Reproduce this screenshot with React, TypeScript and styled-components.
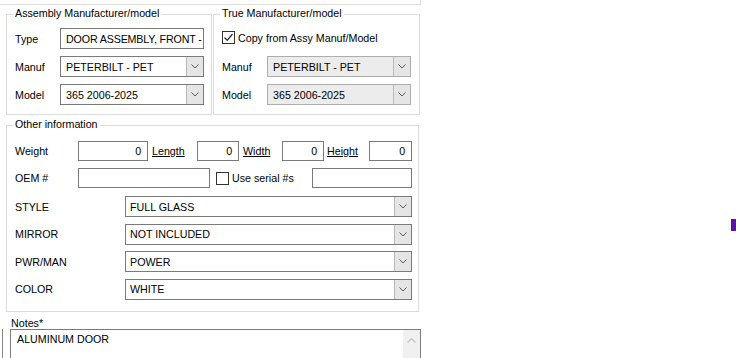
import React from "react";
import styled, { createGlobalStyle } from "styled-components";

const GlobalStyle = createGlobalStyle`
  html, body { margin: 0; padding: 0; background: #fff; }
  body {
    font-family: "Liberation Sans", Arial, sans-serif;
    font-size: 10.7px;
    color: #000;
  }
  * { box-sizing: border-box; }
`;

const Page = styled.div`
  width: 736px;
  height: 358px;
  overflow: hidden;
  display: flex;
  background: #fff;
`;

const Column = styled.div`
  width: 421px;
  flex: none;
  display: flex;
  flex-direction: column;
`;

const PrevEdge = styled.div`
  height: 5px;
  flex: none;
  border-bottom: 1px solid #dcdcdc;
  border-right: 1px solid #dcdcdc;
`;

const TopGroups = styled.div`
  display: flex;
  gap: 1px;
  padding-left: 6px;
  margin-top: 9px;
`;

const Group = styled.div<{ $w: number; $h: number; $mt?: number; $ml?: number }>`
  position: relative;
  flex: none;
  width: ${(p) => p.$w}px;
  height: ${(p) => p.$h}px;
  margin-top: ${(p) => p.$mt ?? 0}px;
  margin-left: ${(p) => p.$ml ?? 0}px;
  border: 1px solid #dcdcdc;
`;

const Legend = styled.span`
  position: absolute;
  top: -8px;
  left: 6px;
  padding: 0 2px;
  background: #fff;
  line-height: 13px;
  white-space: nowrap;
`;

const GroupBody = styled.div<{ $pt: number; $gap: number }>`
  display: flex;
  flex-direction: column;
  padding: ${(p) => p.$pt}px 6px 0 8px;
  gap: ${(p) => p.$gap}px;
`;

const Row = styled.div<{ $h?: number }>`
  display: flex;
  align-items: center;
  height: ${(p) => p.$h ?? 21}px;
`;

const Label = styled.span<{ $w: number }>`
  width: ${(p) => p.$w}px;
  flex: none;
  white-space: nowrap;
`;

const TextBox = styled.div<{ $w: number; $right?: boolean; $auto?: boolean }>`
  width: ${(p) => p.$w}px;
  flex: none;
  height: 100%;
  margin-left: ${(p) => (p.$auto ? "auto" : "0")};
  border: 1px solid #7a7a7a;
  background: #fff;
  padding: ${(p) => (p.$right ? "0 6px 0 2px" : "0 1px 0 5px")};
  display: flex;
  align-items: center;
  justify-content: ${(p) => (p.$right ? "flex-end" : "flex-start")};
  letter-spacing: -0.15px;
  white-space: nowrap;
  overflow: hidden;
`;

const LinkText = styled.span<{ $w: number; $pl: number }>`
  width: ${(p) => p.$w}px;
  flex: none;
  padding-left: ${(p) => p.$pl}px;
  text-decoration: underline;
  white-space: nowrap;
`;

const Combo = styled.div<{ $w: number; $disabled?: boolean }>`
  width: ${(p) => p.$w}px;
  flex: none;
  height: 100%;
  display: flex;
  border: 1px solid ${(p) => (p.$disabled ? "#adadad" : "#7a7a7a")};
  background: ${(p) => (p.$disabled ? "#ececec" : "#fff")};
`;

const ComboText = styled.span<{ $pl: number }>`
  flex: 1;
  padding-left: ${(p) => p.$pl}px;
  display: flex;
  align-items: center;
  white-space: nowrap;
  overflow: hidden;
`;

const ComboButton = styled.span`
  width: 17px;
  flex: none;
  background: #e5e5e5;
  border-left: 1px solid #b9b9b9;
  display: flex;
  align-items: center;
  justify-content: center;
`;

const CheckRow = styled.div`
  display: flex;
  align-items: center;
  height: 13px;
  margin-bottom: 5px;
`;

const CheckBox = styled.span<{ $ml?: number }>`
  width: 13px;
  height: 13px;
  flex: none;
  margin-left: ${(p) => p.$ml ?? 0}px;
  border: 1px solid #333;
  background: #fff;
  display: inline-flex;
  align-items: center;
  justify-content: center;
`;

const CheckLabel = styled.span`
  margin-left: 3px;
  white-space: nowrap;
`;

const SelectList = styled.div`
  display: flex;
  flex-direction: column;
  gap: 6.5px;
  margin-top: 1px;
`;

const NotesLabel = styled.div`
  margin-top: 5px;
  height: 12px;
  line-height: 12px;
  padding-left: 11px;
`;

const NotesRow = styled.div`
  display: flex;
  height: 40px;
  flex: none;
`;

const Stub = styled.div`
  width: 3px;
  flex: none;
  border-right: 1px solid #8a8a8a;
`;

const NotesArea = styled.div`
  margin-left: 7px;
  width: 411px;
  flex: none;
  display: flex;
  border: 1px solid #7a7a7a;
  border-bottom: none;
`;

const NotesText = styled.div`
  flex: 1;
  padding: 3px 0 0 6px;
  line-height: 13px;
`;

const ScrollBar = styled.div`
  width: 17px;
  flex: none;
  background: #f0f0f0;
  display: flex;
  justify-content: center;
  padding-top: 8px;
`;

const RightArea = styled.div`
  flex: 1;
  display: flex;
  justify-content: flex-end;
  align-items: flex-start;
  padding-top: 219px;
`;

const Marker = styled.div`
  width: 5px;
  height: 12px;
  background: #5a14a8;
`;

const Chevron = () => (
  <svg width="8" height="5" viewBox="0 0 8 5">
    <path d="M0.5 0.5 L4 4 L7.5 0.5" fill="none" stroke="#5a5a5a" strokeWidth="1" />
  </svg>
);

const ChevronUp = () => (
  <svg width="9" height="5" viewBox="0 0 9 5">
    <path d="M0.5 4.5 L4.5 0.8 L8.5 4.5" fill="none" stroke="#c4c4c4" strokeWidth="1.2" />
  </svg>
);

const Check = () => (
  <svg width="11" height="11" viewBox="0 0 11 11">
    <path d="M1.5 5.5 L4.2 8.3 L9.5 2" fill="none" stroke="#222" strokeWidth="1.2" />
  </svg>
);

const ComboBox: React.FC<{ w: number; text: string; disabled?: boolean; pl?: number }> = ({
  w,
  text,
  disabled,
  pl = 5,
}) => (
  <Combo $w={w} $disabled={disabled}>
    <ComboText $pl={pl}>{text}</ComboText>
    <ComboButton>
      <Chevron />
    </ComboButton>
  </Combo>
);

const selects = [
  { label: "STYLE", value: "FULL GLASS" },
  { label: "MIRROR", value: "NOT INCLUDED" },
  { label: "PWR/MAN", value: "POWER" },
  { label: "COLOR", value: "WHITE" },
];

export default function App() {
  return (
    <>
      <GlobalStyle />
      <Page>
        <Column>
          <PrevEdge />
          <TopGroups>
            <Group $w={206} $h={101}>
              <Legend>Assembly Manufacturer/model</Legend>
              <GroupBody $pt={13} $gap={7}>
                <Row>
                  <Label $w={45}>Type</Label>
                  <TextBox $w={144}>DOOR ASSEMBLY, FRONT -</TextBox>
                </Row>
                <Row>
                  <Label $w={45}>Manuf</Label>
                  <ComboBox w={144} text="PETERBILT - PET" />
                </Row>
                <Row>
                  <Label $w={45}>Model</Label>
                  <ComboBox w={144} text="365 2006-2025" />
                </Row>
              </GroupBody>
            </Group>
            <Group $w={207} $h={101}>
              <Legend>True Manufacturer/model</Legend>
              <GroupBody $pt={16} $gap={7}>
                <CheckRow>
                  <CheckBox>
                    <Check />
                  </CheckBox>
                  <CheckLabel>Copy from Assy Manuf/Model</CheckLabel>
                </CheckRow>
                <Row>
                  <Label $w={45}>Manuf</Label>
                  <ComboBox w={144} text="PETERBILT - PET" disabled />
                </Row>
                <Row>
                  <Label $w={45}>Model</Label>
                  <ComboBox w={144} text="365 2006-2025" disabled />
                </Row>
              </GroupBody>
            </Group>
          </TopGroups>
          <Group $w={413} $h={187} $mt={10} $ml={6}>
            <Legend>Other information</Legend>
            <GroupBody $pt={15} $gap={7}>
              <Row $h={20}>
                <Label $w={63}>Weight</Label>
                <TextBox $w={70} $right>0</TextBox>
                <LinkText $w={49} $pl={4}>Length</LinkText>
                <TextBox $w={42} $right>0</TextBox>
                <LinkText $w={43} $pl={4}>Width</LinkText>
                <TextBox $w={42} $right>0</TextBox>
                <LinkText $w={45} $pl={3}>Height</LinkText>
                <TextBox $w={43} $right>0</TextBox>
              </Row>
              <Row $h={20}>
                <Label $w={63}>OEM #</Label>
                <TextBox $w={132} />
                <CheckBox $ml={6} />
                <CheckLabel>Use serial #s</CheckLabel>
                <TextBox $w={100} $auto />
              </Row>
              <SelectList>
                {selects.map((s) => (
                  <Row key={s.label}>
                    <Label $w={110}>{s.label}</Label>
                    <ComboBox w={287} text={s.value} pl={4} />
                  </Row>
                ))}
              </SelectList>
            </GroupBody>
          </Group>
          <NotesLabel>Notes*</NotesLabel>
          <NotesRow>
            <Stub />
            <NotesArea>
              <NotesText>ALUMINUM DOOR</NotesText>
              <ScrollBar>
                <ChevronUp />
              </ScrollBar>
            </NotesArea>
          </NotesRow>
        </Column>
        <RightArea>
          <Marker />
        </RightArea>
      </Page>
    </>
  );
}
